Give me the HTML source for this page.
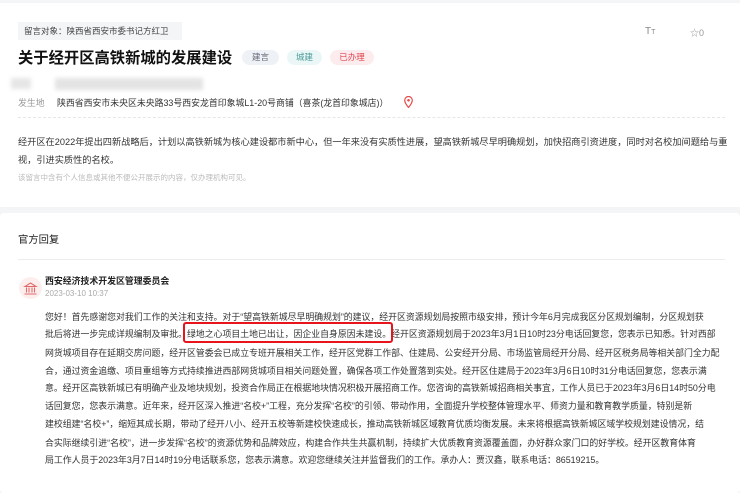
<!DOCTYPE html>
<html><head><meta charset="utf-8"><style>
*{margin:0;padding:0;box-sizing:border-box}
body{width:740px;height:490px;background:#f4f5f7;font-family:"Liberation Sans","Noto Sans CJK SC",sans-serif;color:#333;position:relative;overflow:hidden}
.card{position:absolute;left:0;width:740px;background:#fff}
.a{position:absolute;white-space:nowrap}
.tag{position:absolute;top:47px;height:15px;line-height:15px;border-radius:8px;font-size:8.5px;text-align:center}
.r{position:absolute;left:45px;font-size:8.9px;line-height:12px;white-space:nowrap;color:#333}
</style></head><body>
<div class="card" style="top:3px;height:204px">
 <div class="a" style="left:18px;top:19px;width:164px;height:18px;background:#f4f5f7;font-size:8.5px;line-height:18px;padding-left:6px;color:#444">留言对象：陕西省西安市委书记方红卫</div>
 <div class="a" style="left:645px;top:23px;font-size:10px;color:#888">T<span style="font-size:7px">T</span></div>
 <div class="a" style="left:690px;top:23px;font-size:9px;color:#999">☆0</div>
 <div class="a" style="left:18px;top:43px;font-size:15.3px;font-weight:bold;color:#111">关于经开区高铁新城的发展建设</div>
 <div class="tag" style="left:242px;width:37px;background:#eef1f6;color:#667">建言</div>
 <div class="tag" style="left:287px;width:35px;background:#eaf7f6;color:#4a9a98">城建</div>
 <div class="tag" style="left:330px;width:44px;background:#fdecee;color:#e0454f">已办理</div>
 <div class="a" style="left:11px;top:75px;width:20px;height:11px;background:#e6e6e6;filter:blur(2px)"></div>
 <div class="a" style="left:55px;top:75px;width:148px;height:12px;background:#e4e4e4;filter:blur(2px)"></div>
 <div class="a" style="left:18px;top:93px;font-size:8.9px;color:#999">发生地</div>
 <div class="a" style="left:57px;top:93px;font-size:8.9px;color:#333">陕西省西安市未央区未央路33号西安龙首印象城L1-20号商铺（喜茶(龙首印象城店)）</div>
 <svg class="a" style="left:404px;top:93px" width="9" height="12" viewBox="0 0 9 12"><path d="M4.5 11.5C1.5 8 .7 6 .7 4.3a3.8 3.8 0 0 1 7.6 0c0 1.7-.8 3.7-3.8 7.2z" fill="none" stroke="#e84a4a" stroke-width="1.2"/><circle cx="4.5" cy="4.3" r="1.3" fill="#e84a4a"/></svg>
 <div class="a" style="left:18px;top:114px;width:707px;border-top:1px dashed #e6e6e6"></div>
 <div class="a" style="left:18px;top:130px;font-size:9.2px;line-height:18px;color:#333">经开区在2022年提出四新战略后，计划以高铁新城为核心建设都市新中心，但一年来没有实质性进展，望高铁新城尽早明确规划，加快招商引资进度，同时对名校加间题给与重<br>视，引进实质性的名校。</div>
 <div class="a" style="left:18px;top:169px;font-size:7.5px;color:#bbb">该留言中含有个人信息或其他不便公开展示的内容，仅办理机构可见。</div>
</div>
<div class="card" style="top:213px;height:280px;border-radius:4px">
 <div class="a" style="left:18px;top:18px;font-size:10.3px;color:#222">官方回复</div>
 <div class="a" style="left:18px;top:46px;width:707px;border-top:1px solid #ececec"></div>
 <div class="a" style="left:19px;top:64px;width:23px;height:22px;border-radius:50%;background:#fdeeee"></div>
 <svg class="a" style="left:23px;top:68px" width="15" height="15" viewBox="0 0 15 15" fill="none" stroke="#e06a6a" stroke-width="1.1"><path d="M2 5.5L7.5 2 13 5.5zM3.5 6.5v5M6 6.5v5M9 6.5v5M11.5 6.5v5M1.5 13h12"/></svg>
 <div class="a" style="left:45px;top:61px;font-size:8.9px;font-weight:bold;color:#222">西安经济技术开发区管理委员会</div>
 <div class="a" style="left:45px;top:76px;font-size:8px;color:#aaa">2023-03-10 10:37</div>
 <div class="r" style="top:98px">您好！首先感谢您对我们工作的关注和支持。对于“望高铁新城尽早明确规划”的建议，经开区资源规划局按照市级安排，预计今年6月完成我区分区规划编制，分区规划获</div>
 <div class="r" style="top:115px">批后将进一步完成详规编制及审批。绿地之心项目土地已出让，因企业自身原因未建设。经开区资源规划局于2023年3月1日10时23分电话回复您，您表示已知悉。针对西部</div>
 <div class="r" style="top:134px">网货城项目存在延期交房问题，经开区管委会已成立专班开展相关工作，经开区党群工作部、住建局、公安经开分局、市场监管局经开分局、经开区税务局等相关部门全力配</div>
 <div class="r" style="top:152px">合，通过资金追缴、项目重组等方式持续推进西部网货城项目相关问题处置，确保各项工作处置落到实处。经开区住建局于2023年3月6日10时31分电话回复您，您表示满</div>
 <div class="r" style="top:169px">意。经开区高铁新城已有明确产业及地块规划，投资合作局正在根据地块情况积极开展招商工作。您咨询的高铁新城招商相关事宜，工作人员已于2023年3月6日14时50分电</div>
 <div class="r" style="top:187px">话回复您，您表示满意。近年来，经开区深入推进“名校+”工程，充分发挥“名校”的引领、带动作用，全面提升学校整体管理水平、师资力量和教育教学质量，特别是新</div>
 <div class="r" style="top:205px">建校组建“名校+”，缩短其成长期，带动了经开八小、经开五校等新建校快速成长，推动高铁新城区域教育优质均衡发展。未来将根据高铁新城区域学校规划建设情况，结</div>
 <div class="r" style="top:224px">合实际继续引进“名校”，进一步发挥“名校”的资源优势和品牌效应，构建合作共生共赢机制，持续扩大优质教育资源覆盖面，办好群众家门口的好学校。经开区教育体育</div>
 <div class="r" style="top:241px">局工作人员于2023年3月7日14时19分电话联系您，您表示满意。欢迎您继续关注并监督我们的工作。承办人：贾汉鑫，联系电话：86519215。</div>
 <div class="a" style="left:183px;top:109px;width:210px;height:21px;border:2px solid #e8141c;border-radius:3px"></div>
</div>
</body></html>
